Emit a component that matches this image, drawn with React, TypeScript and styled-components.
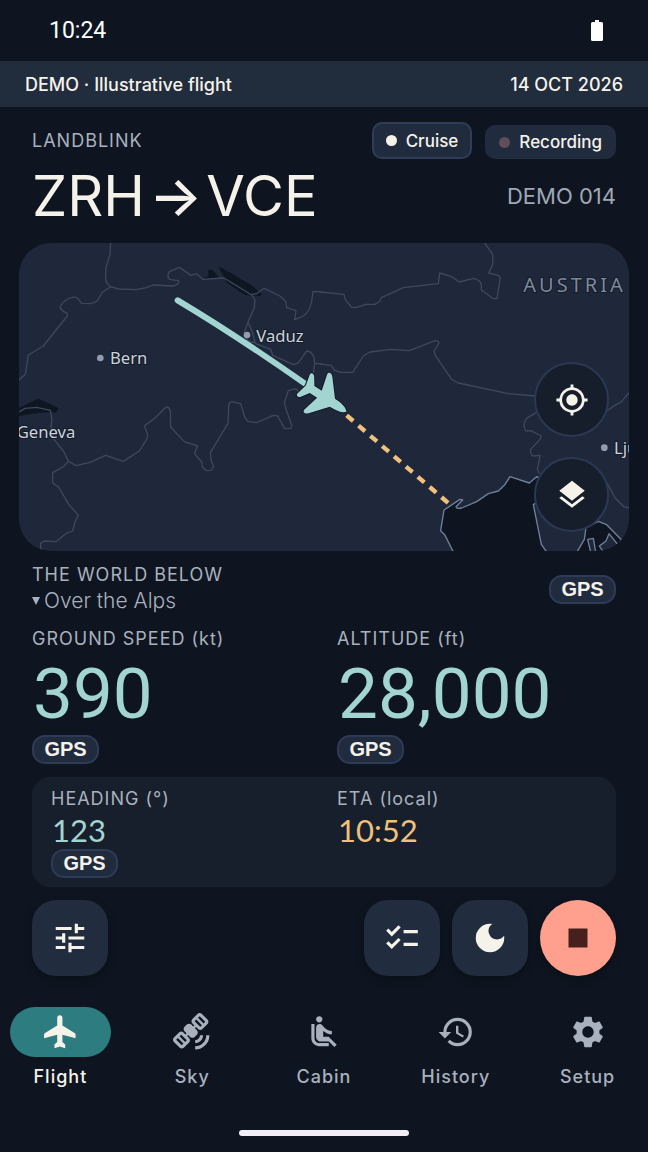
import styled, { createGlobalStyle, css } from "styled-components";
import { useState } from "react";
import type { ReactNode } from "react";
import {
    MdAirlineSeatReclineNormal,
    MdChecklist,
    MdDarkMode,
    MdHistory,
    MdLayers,
    MdMyLocation,
    MdSatelliteAlt,
    MdSettings,
    MdStop,
    MdTune,
} from "react-icons/md";

const GlobalStyle = createGlobalStyle`
    * {
        box-sizing: border-box;
    }

    body {
        margin: 0;
        background-color: #0e1520;
        color: #f5f2ea;
        font-family: Inter, "Liberation Sans", sans-serif;
    }

    button {
        font: inherit;
        color: inherit;
        cursor: pointer;
    }
`;

const Screen = styled.div`
    display: flex;
    flex-direction: column;
    min-height: 100vh;
`;

const StatusBar = styled.div`
    display: flex;
    align-items: center;
    justify-content: space-between;
    height: 61px;
    padding: 0 45px 0 49px;
    font-family: Roboto, sans-serif;
    font-size: 23px;
    color: #ffffff;
`;

const DemoBanner = styled.div`
    display: flex;
    align-items: center;
    justify-content: space-between;
    height: 46px;
    padding: 0 25px;
    background-color: #212c3d;
    font-size: 18px;
    font-weight: 500;
`;

const Header = styled.header`
    padding: 15px 32px 10px;
`;

const HeaderRow = styled.div`
    display: flex;
    align-items: flex-end;
    gap: 13px;
`;

const Label = styled.div`
    font-size: 18px;
    line-height: 24px;
    letter-spacing: 1px;
    color: #a9b1be;
`;

const Brand = styled(Label)`
    flex: 1;
    align-self: center;
`;

const Chip = styled.div<{ $outlined?: boolean }>`
    display: flex;
    align-items: center;
    gap: 9px;
    height: 34px;
    padding: 0 14px;
    border-radius: 10px;
    background-color: #212b3e;
    font-size: 17px;
    font-weight: 500;

    ${({ $outlined }) => $outlined && css`
        height: 37px;
        padding: 0 12px;
        border: 2px solid #2f3d59;
    `}
`;

const Dot = styled.span<{ $color: string }>`
    width: 11px;
    height: 11px;
    border-radius: 50%;
    background-color: ${({ $color }) => $color};
`;

const TitleRow = styled.div`
    display: flex;
    align-items: center;
    justify-content: space-between;
`;

const Route = styled.h1`
    display: flex;
    gap: 4px;
    margin: 0;
    font-size: 56px;
    font-weight: 400;
    line-height: 74px;
`;

const Arrow = styled.span`
    font-weight: 500;
`;

const FlightNumber = styled.span`
    font-size: 22px;
    color: #a0a8b6;
`;

const MapPanel = styled.section`
    position: relative;
    margin: 0 19px;
    border-radius: 32px;
    overflow: hidden;
    background-color: #1e283a;

    > svg {
        display: block;
        width: 100%;
    }
`;

const MapActions = styled.div`
    position: absolute;
    right: 20px;
    bottom: 19px;
    display: flex;
    flex-direction: column;
    gap: 20px;
`;

const MapButton = styled.button`
    display: flex;
    align-items: center;
    justify-content: center;
    width: 75px;
    height: 75px;
    padding: 0;
    border: 2px solid #2b3854;
    border-radius: 50%;
    background-color: #161d2b;
    font-size: 34px;
`;

const Below = styled.section`
    display: flex;
    align-items: center;
    justify-content: space-between;
    padding: 12px 32px;
`;

const BelowToggle = styled.button`
    display: flex;
    align-items: center;
    gap: 4px;
    padding: 0;
    border: 0;
    background: none;
    font-size: 21px;
    font-weight: 300;
    line-height: 28px;
    color: #a9b1be;
`;

const Badge = styled.span`
    display: inline-flex;
    align-items: center;
    justify-content: center;
    width: 67px;
    height: 29px;
    border: 2px solid #2e3a56;
    border-radius: 13px;
    background-color: #212b3e;
    font-family: "Liberation Sans", sans-serif;
    font-size: 20px;
    font-weight: 700;
`;

const Metrics = styled.section`
    display: grid;
    grid-template-columns: 1fr 1fr;
    column-gap: 26px;
    padding: 0 32px;
`;

const MetricCard = styled(Metrics)`
    margin: 13px 32px;
    padding: 10px 19px 9px;
    border-radius: 18px;
    background-color: #181f2c;
`;

const Metric = styled.div`
    display: flex;
    flex-direction: column;
    align-items: flex-start;
`;

const BigValue = styled.div`
    padding: 2px 0 0 1px;
    font-family: Roboto, sans-serif;
    font-size: 71px;
    line-height: 82px;
    color: #a2d5d2;
`;

const SmallValue = styled.div<{ $warm?: boolean }>`
    padding-left: 1px;
    font-family: Lato, sans-serif;
    font-size: 31px;
    line-height: 38px;
    color: ${({ $warm }) => ($warm ? "#f1c07d" : "#a2d5d2")};
`;

const Actions = styled.div`
    display: flex;
    gap: 12px;
    padding: 0 32px;
`;

const ActionButton = styled.button<{ $stop?: boolean }>`
    display: flex;
    align-items: center;
    justify-content: center;
    width: 76px;
    height: 76px;
    padding: 0;
    border: 0;
    border-radius: ${({ $stop }) => ($stop ? "50%" : "24px")};
    background-color: ${({ $stop }) => ($stop ? "#ff9f8e" : "#212c3e")};
    box-shadow: 0 3px 8px rgba(0, 0, 0, 0.3);
    color: ${({ $stop }) => ($stop ? "#45201d" : "#f5f2ea")};
    font-size: 38px;

    &:first-child {
        margin-right: auto;
    }
`;

const Nav = styled.nav`
    display: grid;
    grid-template-columns: repeat(5, 1fr);
    gap: 31px;
    margin-top: 31px;
    padding: 0 10px;
`;

const NavLink = styled.a<{ $active: boolean }>`
    display: flex;
    flex-direction: column;
    align-items: center;
    gap: 8px;
    color: ${({ $active }) => ($active ? "#f5f2ea" : "#a9b1be")};
    font-size: 18px;
    font-weight: 500;
    line-height: 24px;
    letter-spacing: 1px;
    text-decoration: none;
`;

const NavPill = styled.span<{ $active: boolean }>`
    display: flex;
    align-items: center;
    justify-content: center;
    width: 100%;
    height: 50px;
    border-radius: 25px;
    background-color: ${({ $active }) => ($active ? "#2d7c80" : "transparent")};
    font-size: 38px;
`;

const HomeBar = styled.div`
    width: 170px;
    height: 6px;
    margin: auto auto 16px;
    border-radius: 3px;
    background-color: #f1eff5;
`;

const MapText = styled.text`
    font-family: "Noto Sans", sans-serif;
    font-size: 50px;
    fill: #ccd2dc;
    stroke: #141b28;
    stroke-width: 6px;
    paint-order: stroke;
`;

const CountryText = styled(MapText)`
    font-size: 60px;
    letter-spacing: 9px;
    fill: #7d899b;
`;

const BatteryIcon = () => (
    <svg width="12" height="21" viewBox="0 0 12 21" fill="#ffffff" aria-hidden="true">
        <path d="M4 0h4v2h2.500a1.500 1.500 0 0 1 1.500 1.500v16a1.500 1.500 0 0 1-1.500 1.500h-9a1.500 1.500 0 0 1-1.500-1.500v-16a1.500 1.500 0 0 1 1.500-1.500h2.500z" />
    </svg>
);

const PlaneIcon = () => (
    <svg width="32" height="34" viewBox="131 78 92 98" fill="currentColor" aria-hidden="true">
        <path d="M169 87a7.500 8 0 0 1 15 0v21l35 22q3 2 3 5v10l-38-10v21l8 7v11l-15.500-5-15.500 5v-11l8-7v-21l-38 10v-10q0-3 3-5l35-22z" />
    </svg>
);

const FlightMap = () => (
    <svg viewBox="0 0 1830 924" role="img" aria-label="Route over the Alps">
        <g fill="none" stroke="#3c485c" strokeWidth="4" strokeLinejoin="round">
            <g transform="translate(-27 -21)">
                <g fill="#0e1622" stroke="none">
                    <path d="M578 128l18-8-2-16q6-6 16 0l16 20z" />
                    <path d="M626 92l14 6 80 47 36 28-6 7-45-3-55-37z" />
                    <path d="M27 515l58-27 61 28-8 16-14-4-64 6-33 6z" />
                </g>
                <path d="M302 20L300 55L288 95L287 130Q290 145 303 152L278 168L262 194Q252 202 240 203L215 202L204 188Q195 180 180 186Q155 197 150 215Q155 225 172 232L172 240L100 330L55 357L46 415L27 432" />
                <path d="M303 152L325 159L378 161L410 155L428 147L490 150Q510 145 506 134L478 130Q470 120 478 107L508 94L543 118L560 113L578 130L642 126L725 177L735 192L733 215L714 258L703 290Q705 320 735 320L728 290L714 258" />
                <path d="M725 175L740 173L762 157L810 180L828 197L830 215L858 224L854 251L880 240Q900 225 905 195L909 166L935 168" />
                <path d="M735 322L782 340L788 358L850 386L865 380L890 345Q905 345 912 365L914 382L935 384M914 382L908 430" />
                <path d="M868 470L858 458L835 464L823 500L830 525L846 570L842 577L824 578L803 540L790 538L740 560L713 556L704 543L692 503L665 497Q655 500 656 512L654 562L601 650L603 672L611 692L603 703L590 704L578 694L575 678L553 652L563 630L523 617L482 573L481 525Q478 512 468 513L435 546L403 570L413 595L410 610L388 645L340 676L287 658L240 679L198 689L176 676L160 645L132 610L123 570L126 550L121 523L80 514L45 517L27 528" />
                <path d="M176 676L160 692L128 710L128 740L148 756L176 805L205 838L196 855L188 885L167 893L138 917L103 915L92 922L92 937L100 946" />
            </g>
            <g transform="translate(903 -21)">
                <path d="M0 168L72 175Q73 185 77 192L95 214L110 214L138 205L165 205L180 195L184 185L250 155L355 143L359 111L395 122L418 138L460 127Q485 132 484 150L484 162L520 188L531 188L541 125L535 118L506 111L519 83L518 55L493 20" />
                <path d="M0 384L33 388L43 402L62 409L98 409L130 360L150 348L212 340L268 344L345 314Q356 314 357 322L342 345L346 358L395 430L415 441L565 473L645 480" />
                <path d="M660 522L620 547Q605 565 618 585L632 584L664 600L660 610L632 640Q630 655 640 660L660 658L652 700L658 712" />
                <path d="M855 528L885 508L905 497L927 470M860 740L885 785L912 812L927 816" />
                <g fill="#0e1520" stroke="#71809a">
                    <path d="M400 948L374 896L362 884L372 822L420 790L428 792L408 812Q410 820 425 816L470 797L505 773L535 765L553 748L570 722L628 741L650 722L680 740L680 780L640 806L664 925L680 948" />
                    <path d="M771 948L793 910L798 875L835 856L860 866L905 912L880 948" />
                    <path fill="#1e283a" d="M812 948L803 910L820 907L827 948M850 948L838 930L858 915L867 893L893 925" />
                </g>
            </g>
        </g>

        <circle cx="244" cy="345" r="10" fill="#929cab" />
        <MapText x="273" y="363">Bern</MapText>
        <MapText x="-7" y="584">Geneva</MapText>
        <circle cx="1756" cy="614" r="10" fill="#929cab" />
        <MapText x="1785" y="632">Ljubljana</MapText>
        <CountryText x="1513" y="146">AUSTRIA</CountryText>

        <path d="M476 172Q650 276 858 422" fill="none" stroke="#a2d5d2" strokeWidth="18" strokeLinecap="round" />
        <circle cx="684" cy="276" r="10" fill="#929cab" />
        <MapText x="712" y="296">Vaduz</MapText>
        <path d="M983 517L1291 783" fill="none" stroke="#f1c07d" strokeWidth="13" strokeDasharray="26 21" />
        <path
            transform="translate(917 464) rotate(123) scale(7.5) translate(-12 -12)"
            fill="#a2d5d2"
            stroke="#141b28"
            strokeWidth="0.8"
            paintOrder="stroke"
            d="M12 1.600c1.300 1 1.900 3.400 1.900 6.700l6.800 5.700c1.200 1 .9 2.600-.5 2.200L13.700 14.500v3.500l3.200 2.200c1 .8.6 2.100-.5 1.800L12 21l-4.400 1c-1.100.3-1.500-1-.5-1.800l3.200-2.200v-3.500l-6.500 1.700c-1.400.4-1.700-1.200-.5-2.200l6.800-5.700C10.100 5 10.700 2.600 12 1.600z"
        />
    </svg>
);

type TabProps = {
    name: string;
    icon: ReactNode;
}

const tabs: TabProps[] = [
    { name: "Flight", icon: <PlaneIcon /> },
    { name: "Sky", icon: <MdSatelliteAlt /> },
    { name: "Cabin", icon: <MdAirlineSeatReclineNormal /> },
    { name: "History", icon: <MdHistory /> },
    { name: "Setup", icon: <MdSettings /> },
];

const App = () => {
    const [tab, setTab] = useState("Flight");

    return (
        <Screen>
            <GlobalStyle />
            <StatusBar>
                <span>10:24</span>
                <BatteryIcon />
            </StatusBar>
            <DemoBanner>
                <span>DEMO · Illustrative flight</span>
                <span>14 OCT 2026</span>
            </DemoBanner>

            <Header>
                <HeaderRow>
                    <Brand>LANDBLINK</Brand>
                    <Chip $outlined><Dot $color="#f5f2ea" />Cruise</Chip>
                    <Chip><Dot $color="#5f4d58" />Recording</Chip>
                </HeaderRow>
                <TitleRow>
                    <Route>
                        <span>ZRH</span>
                        <Arrow>→</Arrow>
                        <span>VCE</span>
                    </Route>
                    <FlightNumber>DEMO 014</FlightNumber>
                </TitleRow>
            </Header>

            <MapPanel>
                <FlightMap />
                <MapActions>
                    <MapButton aria-label="Center on aircraft"><MdMyLocation /></MapButton>
                    <MapButton aria-label="Map layers"><MdLayers /></MapButton>
                </MapActions>
            </MapPanel>

            <Below>
                <div>
                    <Label>THE WORLD BELOW</Label>
                    <BelowToggle>
                        <svg width="8" height="8" viewBox="0 0 8 8" fill="currentColor" aria-hidden="true">
                            <path d="M0 0h8L4 8z" />
                        </svg>
                        Over the Alps
                    </BelowToggle>
                </div>
                <Badge>GPS</Badge>
            </Below>

            <Metrics>
                <Metric>
                    <Label>GROUND SPEED (kt)</Label>
                    <BigValue>390</BigValue>
                    <Badge>GPS</Badge>
                </Metric>
                <Metric>
                    <Label>ALTITUDE (ft)</Label>
                    <BigValue>28,000</BigValue>
                    <Badge>GPS</Badge>
                </Metric>
            </Metrics>

            <MetricCard>
                <Metric>
                    <Label>HEADING (°)</Label>
                    <SmallValue>123</SmallValue>
                    <Badge>GPS</Badge>
                </Metric>
                <Metric>
                    <Label>ETA (local)</Label>
                    <SmallValue $warm>10:52</SmallValue>
                </Metric>
            </MetricCard>

            <Actions>
                <ActionButton aria-label="Adjust display"><MdTune /></ActionButton>
                <ActionButton aria-label="Checklist"><MdChecklist /></ActionButton>
                <ActionButton aria-label="Night mode"><MdDarkMode /></ActionButton>
                <ActionButton $stop aria-label="Stop recording"><MdStop /></ActionButton>
            </Actions>

            <Nav>
                {tabs.map((t) => (
                    <NavLink
                        key={t.name}
                        href={`#${t.name.toLowerCase()}`}
                        $active={t.name === tab}
                        onClick={() => setTab(t.name)}
                    >
                        <NavPill $active={t.name === tab}>{t.icon}</NavPill>
                        {t.name}
                    </NavLink>
                ))}
            </Nav>
            <HomeBar />
        </Screen>
    )
}

export default App;
